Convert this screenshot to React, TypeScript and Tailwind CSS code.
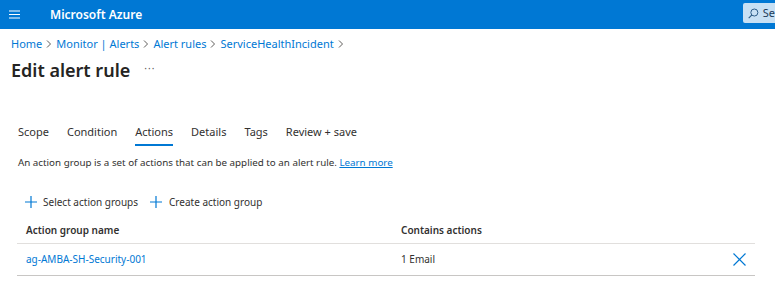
import React from "react";

const Chevron = () => (
  <svg width="8" height="10" viewBox="0 0 8 10" className="mx-[3px]">
    <path d="M2 1.5 L5.5 5 L2 8.5" fill="none" stroke="#605e5c" strokeWidth="1" />
  </svg>
);

const Plus = () => (
  <svg width="12" height="12" viewBox="0 0 12 12">
    <path d="M6 0 V12 M0 6 H12" stroke="#0078d4" strokeWidth="1.2" />
  </svg>
);

export default function App() {
  const font = { fontFamily: '"Segoe UI", "Noto Sans", "Open Sans", sans-serif' };
  return (
    <div className="w-[775px] h-[290px] bg-white overflow-hidden text-[#323130]" style={font}>
      {/* top bar */}
      <div className="h-[29px] bg-[#0078d4] flex items-center">
        <div className="w-[50px] pl-[9px] flex items-center">
          <svg width="11" height="9" viewBox="0 0 11 9">
            <path d="M0 1 H11 M0 4.5 H11 M0 8 H11" stroke="#fff" strokeWidth="1.1" />
          </svg>
        </div>
        <span className="text-white font-semibold text-[12px]">Microsoft Azure</span>
        <div className="ml-auto h-[20px] w-[32px] mt-[-3px] bg-[#c7e0f4] rounded-l-[2px] flex items-center pl-[5px] gap-[4px]">
          <svg width="11" height="11" viewBox="0 0 11 11">
            <circle cx="6.5" cy="4.5" r="3.6" fill="none" stroke="#2b5a85" strokeWidth="1" />
            <path d="M4 7 L0.7 10.3" stroke="#2b5a85" strokeWidth="1.1" />
          </svg>
          <span className="text-[11px] text-[#1b3a57]">Se</span>
        </div>
      </div>

      {/* breadcrumb */}
      <div className="flex items-center pl-[11px] mt-[7px] h-[16px] text-[11px] text-[#0078d4]">
        <span>Home</span>
        <Chevron />
        <span>Monitor | Alerts</span>
        <Chevron />
        <span>Alert rules</span>
        <Chevron />
        <span>ServiceHealthIncident</span>
        <Chevron />
      </div>

      {/* title */}
      <div className="flex items-center pl-[11px] mt-[4px] h-[28px]">
        <span className="text-[18px] font-semibold text-[#252423]">Edit alert rule</span>
        <span className="ml-[14px] text-[10px] text-[#605e5c] tracking-[1px] -mt-[4px]">···</span>
      </div>

      {/* tabs */}
      <div className="flex pl-[18px] mt-[38px] gap-[18px] text-[11px] text-[#323130]">
        {["Scope", "Condition", "Actions", "Details", "Tags", "Review + save"].map((t) => (
          <div key={t} className="flex flex-col items-stretch">
            <span className="h-[20px] leading-[20px]">{t}</span>
            <div className={t === "Actions" ? "h-[2px] bg-[#0078d4] mt-[2px]" : "h-[2px] mt-[2px]"} />
          </div>
        ))}
      </div>

      {/* description */}
      <div className="pl-[18px] mt-[8px] text-[9.8px] text-[#323130] h-[18px] leading-[18px]">
        An action group is a set of actions that can be applied to an alert rule.{" "}
        <span className="text-[#0078d4] underline">Learn more</span>
      </div>

      {/* commands */}
      <div className="flex items-center pl-[25px] mt-[22px] h-[16px] text-[10px] text-[#323130]">
        <Plus />
        <span className="ml-[6px]">Select action groups</span>
        <span className="ml-[12px]"><Plus /></span>
        <span className="ml-[7px]">Create action group</span>
      </div>

      {/* table */}
      <div className="ml-[17px] w-[738px] mt-[7px] text-[10px]">
        <div className="flex items-center h-[27px] border-b border-[#e1dfdd] font-semibold text-[#323130]">
          <div className="w-[384px] pl-[9px]">Action group name</div>
          <div className="flex-1">Contains actions</div>
        </div>
        <div className="flex items-center h-[32px] border-b border-[#c8c6c4]">
          <div className="w-[384px] pl-[9px] text-[#0078d4]">ag-AMBA-SH-Security-001</div>
          <div className="flex-1">1 Email</div>
          <svg width="13" height="13" viewBox="0 0 13 13" className="mr-[9px]">
            <path d="M0.5 0.5 L12.5 12.5 M12.5 0.5 L0.5 12.5" stroke="#0078d4" strokeWidth="1.2" />
          </svg>
        </div>
      </div>
    </div>
  );
}
